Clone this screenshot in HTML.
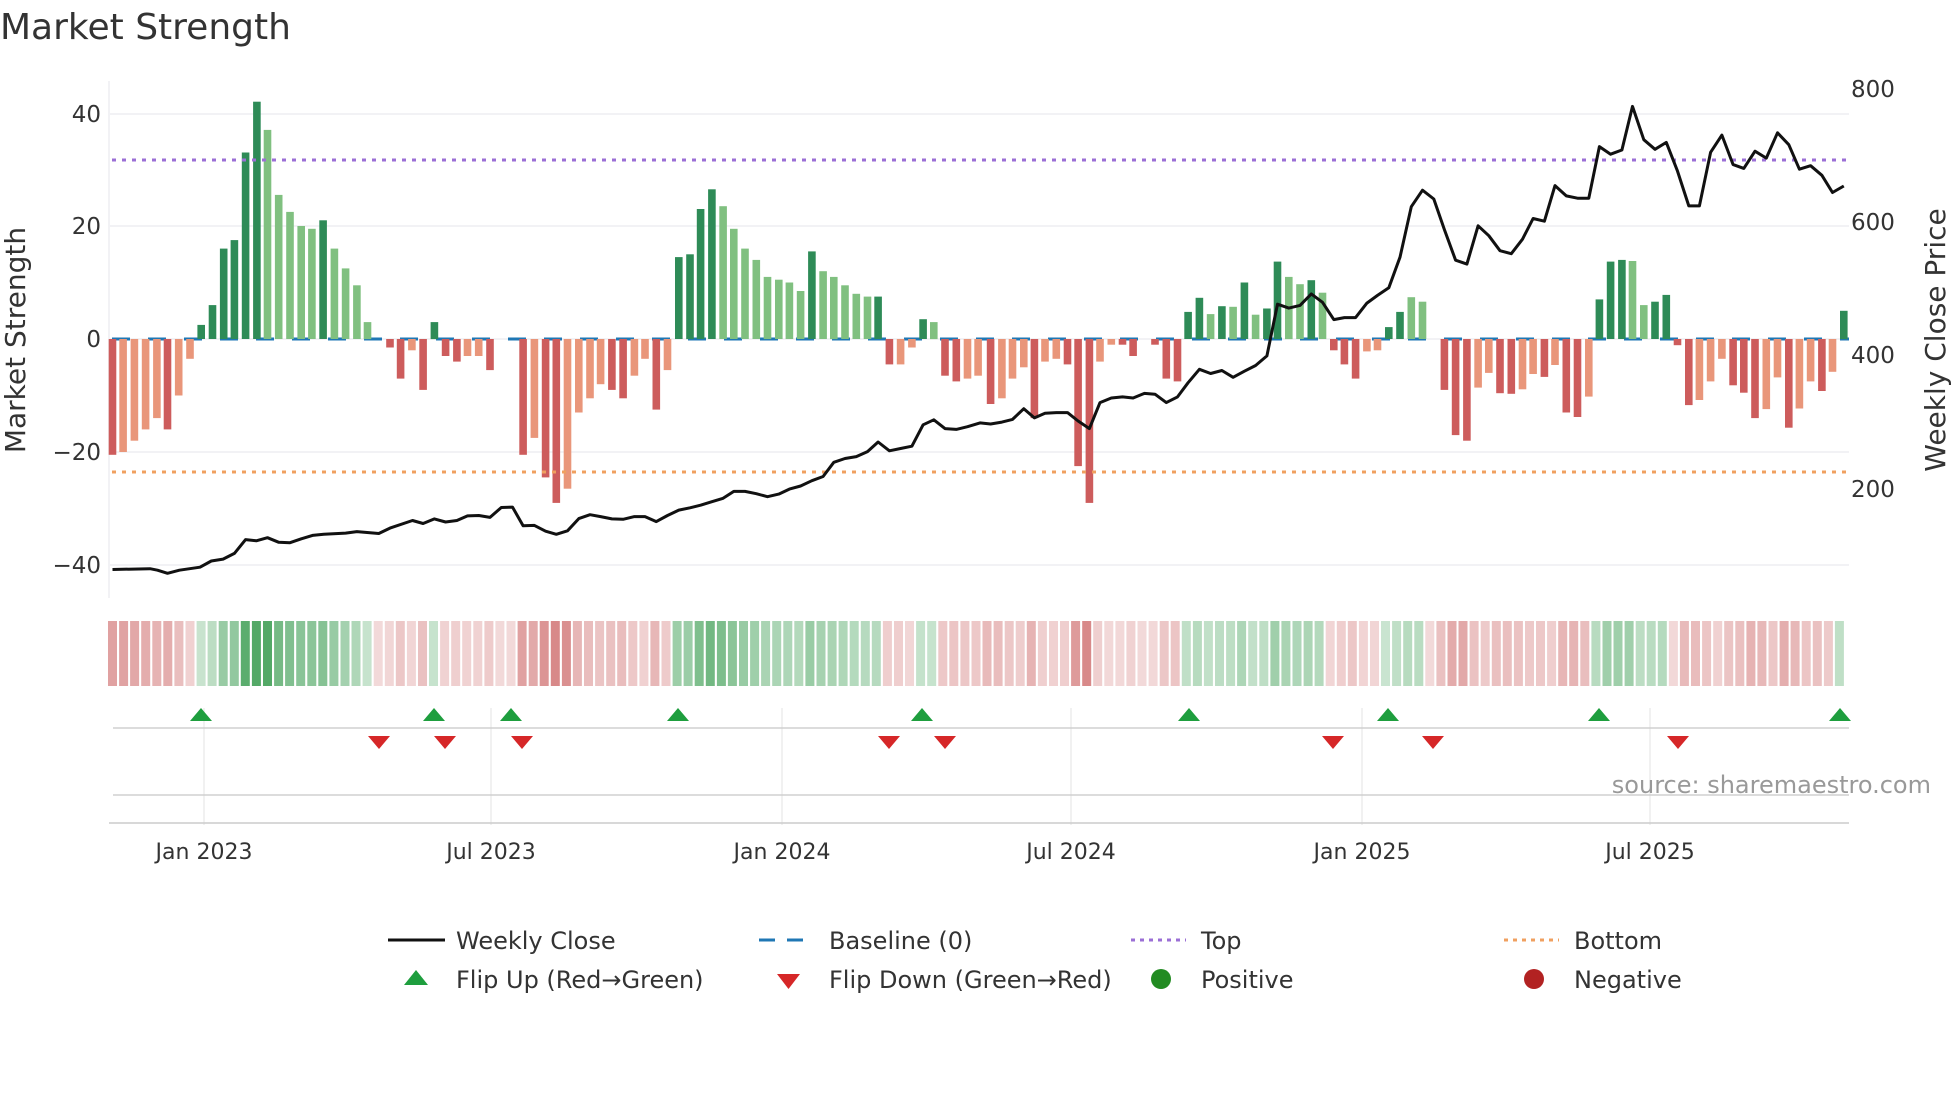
<!DOCTYPE html>
<html><head><meta charset="utf-8"><style>
html,body{margin:0;padding:0;background:#fff;width:1960px;height:1102px;overflow:hidden}
svg{display:block;font-family:"DejaVu Sans","Liberation Sans",sans-serif}
</style></head><body>
<svg id="s" width="1960" height="1102" viewBox="0 0 1960 1102" xmlns="http://www.w3.org/2000/svg">
<text x="0" y="39" font-size="36" fill="#333">Market Strength</text>
<g stroke="#eeeef2" stroke-width="1.5">
<line x1="110" y1="114" x2="1849" y2="114"/><line x1="110" y1="226" x2="1849" y2="226"/>
<line x1="110" y1="339" x2="1849" y2="339"/><line x1="110" y1="452" x2="1849" y2="452"/>
<line x1="110" y1="565" x2="1849" y2="565"/>
<line x1="109" y1="81" x2="109" y2="598"/>
</g>
<g font-size="23" fill="#333" text-anchor="end">
<text x="101" y="122">40</text><text x="101" y="234">20</text><text x="101" y="347">0</text>
<text x="101" y="460">−20</text><text x="101" y="573">−40</text>
</g>
<g font-size="23" fill="#333">
<text x="1851" y="97">800</text><text x="1851" y="230">600</text><text x="1851" y="363">400</text><text x="1851" y="497">200</text>
</g>
<text transform="translate(25,340) rotate(-90)" font-size="28" fill="#333" text-anchor="middle">Market Strength</text>
<text transform="translate(1945,340) rotate(-90)" font-size="28" fill="#333" text-anchor="middle">Weekly Close Price</text>
<line x1="112" y1="339" x2="1849" y2="339" stroke="#1f77b4" stroke-width="3" stroke-dasharray="18 18"/>
<g id="bars"></g>
<line x1="112" y1="160" x2="1849" y2="160" stroke="#9b6fd6" stroke-width="3" stroke-dasharray="4 6"/>
<line x1="112" y1="472" x2="1849" y2="472" stroke="#f0a060" stroke-width="3" stroke-dasharray="4 6"/>
<polyline id="price" fill="none" stroke="#111" stroke-width="3" stroke-linejoin="round"/>
<g id="heat"></g>
<g stroke="#ececec" stroke-width="1.5">
<line x1="204" y1="708" x2="204" y2="825"/><line x1="491" y1="708" x2="491" y2="825"/>
<line x1="782" y1="708" x2="782" y2="825"/><line x1="1071" y1="708" x2="1071" y2="825"/>
<line x1="1362" y1="708" x2="1362" y2="825"/><line x1="1650" y1="708" x2="1650" y2="825"/>
</g>
<line x1="113" y1="728" x2="1849" y2="728" stroke="#d0d0d0" stroke-width="1.5"/>
<line x1="113" y1="795" x2="1849" y2="795" stroke="#d0d0d0" stroke-width="1.5"/>
<line x1="109" y1="823" x2="1849" y2="823" stroke="#ccc" stroke-width="1.5"/>
<g id="tri"></g>
<text x="1931" y="793" font-size="24" fill="#999" text-anchor="end">source: sharemaestro.com</text>
<g font-size="22" fill="#333" text-anchor="middle">
<text x="204" y="859">Jan 2023</text><text x="491" y="859">Jul 2023</text><text x="782" y="859">Jan 2024</text>
<text x="1071" y="859">Jul 2024</text><text x="1362" y="859">Jan 2025</text><text x="1650" y="859">Jul 2025</text>
</g>
<g font-size="24" fill="#333">
<line x1="388" y1="940" x2="445" y2="940" stroke="#111" stroke-width="3"/>
<text x="456" y="949">Weekly Close</text>
<line x1="759" y1="940" x2="814" y2="940" stroke="#1f77b4" stroke-width="3" stroke-dasharray="16 12"/>
<text x="829" y="949">Baseline (0)</text>
<line x1="1131" y1="940" x2="1186" y2="940" stroke="#9b6fd6" stroke-width="3" stroke-dasharray="4 5"/>
<text x="1201" y="949">Top</text>
<line x1="1504" y1="940" x2="1559" y2="940" stroke="#f0a060" stroke-width="3" stroke-dasharray="4 5"/>
<text x="1574" y="949">Bottom</text>
<polygon points="416,970 428,985 404,985" fill="#1e9e3e"/>
<text x="456" y="988">Flip Up (Red→Green)</text>
<polygon points="777,974 800,974 788.5,989" fill="#d62728"/>
<text x="829" y="988">Flip Down (Green→Red)</text>
<circle cx="1161" cy="979" r="10" fill="#228b22"/>
<text x="1201" y="988">Positive</text>
<circle cx="1534" cy="979" r="10" fill="#b22222"/>
<text x="1574" y="988">Negative</text>
</g>
</svg>
<script>
var NS="http://www.w3.org/2000/svg";
function el(t,a,p){var e=document.createElementNS(NS,t);for(var k in a)e.setAttribute(k,a[k]);p.appendChild(e);return e;}
var z1="180 -20.5 d;197 -20 l;215 -18 l;233 -16 l;251 -14 l;268 -16 d;286 -10 l;304 -3.5 l;322 2.5 d;340 6 d;358 16 d;375 17.5 d;393 33 d;411 42 d;428 37 l;446 25.5 l;464 22.5 l;482 20 l;499 19.5 l;517 21 d;535 16 l;553 12.5 l;571 9.5 l;588 3 l;624 -1.5 d;641 -7 d;659 -2 l;677 -9 d;695 3 d;713 -3 d;731 -4 d;748 -3 l;766 -3 l;784 -5.5 d;837 -20.5 d;855 -17.5 l;873 -24.5 d;890 -29 d;908 -26.5 l;926 -13 l;944 -10.5 l;961 -8 l;979 -9 d;997 -10.5 d;1015 -6.5 l;1032 -3.5 l;1050 -12.5 d;1068 -5.5 l;1086 14.5 d;1104 15 d;1121 23 d;1139 26.5 d;1157 23.5 l;1174 19.5 l;1192 16 l;1210 14 l;1228 11 l;1246 10.5 l;1263 10 l;1281 8.5 l;1299 15.5 d;1317 12 l;1334 11 l;1352 9.5 l;1370 8 l;1388 7.5 l;1405 7.5 d;1423 -4.5 d;1441 -4.5 l;1459 -1.5 l;1477 3.5 d;1494 3 l;1512 -6.5 d;1530 -7.5 d;1548 -7 l;1565 -6.5 l";
var z2="17 -11.5 d;35 -10.5 l;52 -7 l;70 -5 l;87 -14 d;104 -4 l;122 -3.5 l;140 -4.5 d;157 -22.5 d;175 -29 d;192 -4 l;210 -1 l;228 -1 d;245 -3 d;280 -1 d;298 -7 d;316 -7.5 d;333 4.8 d;351 7.3 d;369 4.4 l;387 5.8 d;405 5.7 l;423 10 d;441 4.3 l;459 5.4 d;476 13.7 d;494 11 l;512 9.7 l;530 10.4 d;548 8.2 l;566 -2 d;583 -4.5 d;601 -7 d;619 -2.2 l;636 -2 l;654 2.1 d;672 4.8 d;690 7.4 l;708 6.6 l;743 -9 d;761 -17 d;779 -18 d;797 -8.6 l;814 -6 l;832 -9.6 d;850 -9.7 d;868 -8.9 l;885 -6.2 l;903 -6.7 d;920 -4.6 l;938 -13 d;956 -13.8 d;974 -10.2 l;991 7 d;1009 13.7 d;1027 14 d;1044 13.8 l;1062 6 l;1080 6.6 d;1098 7.8 d;1116 -1.1 d;1134 -11.7 d;1151 -10.8 l;1169 -7.5 l;1187 -3.5 l;1205 -8.2 d;1222 -9.5 d;1240 -14 d;1258 -12.4 l;1276 -6.8 l;1294 -15.7 d;1311 -12.3 l;1329 -7.5 l;1347 -9.2 d;1364 -5.8 l;1382 5 d";
var bars=[];
z1.split(";").forEach(function(s){var p=s.split(" ");bars.push([+p[0]/1.6,+p[1],p[2]]);});
z2.split(";").forEach(function(s){var p=s.split(" ");bars.push([980+ +p[0]/1.6,+p[1],p[2]]);});
var bg=document.getElementById("bars");
var col={pd:"#2e8b57",pl:"#80c080",nd:"#cd5c5c",nl:"#e9967a"};
bars.forEach(function(b){var v=b[1],h=Math.abs(v)*5.65,y=v>0?339-h:339;
el("rect",{x:(b[0]-3.8).toFixed(1),y:y.toFixed(1),width:7.6,height:h.toFixed(1),fill:col[(v>0?"p":"n")+b[2]]},bg);});
var hg=document.getElementById("heat");
for(var i=0;i<157;i++){var x=112.5+i*11.07;var best=null,bd=1e9;
bars.forEach(function(b){var d=Math.abs(b[0]-x);if(d<bd){bd=d;best=b;}});
var v=bd<6?best[1]:-0.5;var t=0.22+0.6*Math.min(Math.abs(v)/35,1);
var c=v>0?[46,150,70]:[200,90,90];
var r=Math.round(255+(c[0]-255)*t),g=Math.round(255+(c[1]-255)*t),bb=Math.round(255+(c[2]-255)*t);
el("rect",{x:(x-4.5).toFixed(1),y:621,width:9,height:65,fill:"rgb("+r+","+g+","+bb+")"},hg);}
var p1=[[180,1488],[240,1486],[252,1490],[268,1498],[287,1490],[320,1482],[338,1466],[357,1461],[375,1446],[393,1410],[410,1413],[428,1405],[446,1417],[464,1418],[482,1408],[500,1399],[518,1396],[553,1393],[571,1389],[606,1394],[624,1380],[660,1360],[677,1368],[695,1356],[713,1364],[731,1360],[748,1348],[766,1347],[784,1352],[802,1326],[820,1325],[837,1374],[855,1373],[873,1388],[890,1396],[908,1387],[926,1355],[944,1345],[961,1350],[979,1356],[997,1357],[1015,1350],[1032,1350],[1050,1363],[1068,1347],[1086,1333],[1104,1327],[1121,1320],[1139,1311],[1157,1302],[1174,1284],[1192,1284],[1210,1290],[1228,1298],[1246,1291],[1263,1278],[1281,1270],[1299,1256],[1317,1245],[1334,1208],[1352,1198],[1370,1193],[1388,1180],[1405,1155],[1423,1178],[1441,1172],[1459,1166],[1477,1110],[1494,1097],[1512,1120],[1530,1122],[1548,1115]];
var p2=[[0,1105],[17,1108],[35,1103],[52,1096],[70,1068],[87,1092],[104,1080],[122,1078],[140,1078],[157,1100],[175,1120],[192,1052],[210,1040],[228,1037],[245,1040],[263,1028],[280,1030],[298,1052],[316,1037],[333,1000],[351,965],[369,976],[387,968],[405,986],[423,970],[441,955],[459,930],[476,795],[494,805],[512,798],[530,768],[548,790],[566,835],[583,830],[601,830],[619,792],[636,772],[654,752],[672,672],[690,540],[708,497],[726,520],[743,600],[761,680],[779,690],[797,590],[814,616],[832,655],[850,663],[868,625],[885,571],[903,578],[920,485],[938,512],[956,518],[974,518],[991,383],[1009,403],[1027,392],[1044,278],[1062,365],[1080,390],[1098,372],[1116,447],[1134,538],[1151,538],[1169,398],[1187,353],[1205,430],[1222,440],[1240,395],[1258,413],[1276,347],[1294,378],[1311,442],[1329,433],[1347,458],[1364,503],[1382,486]];
var pts=p1.map(function(p){return (p[0]/1.6).toFixed(1)+","+(p[1]/2.613).toFixed(1);}).concat(p2.map(function(p){return (980+p[0]/1.6).toFixed(1)+","+(p[1]/2.613).toFixed(1);}));
document.getElementById("price").setAttribute("points",pts.join(" "));
var tg=document.getElementById("tri");
[201,434,511,678,922,1189,1388,1599,1840].forEach(function(x){el("polygon",{points:x+",708 "+(x+11)+",721 "+(x-11)+",721",fill:"#1e9e3e"},tg);});
[379,445,522,889,945,1333,1433,1678].forEach(function(x){el("polygon",{points:(x-11)+",736 "+(x+11)+",736 "+x+",749",fill:"#d62728"},tg);});
</script>
</body></html>
